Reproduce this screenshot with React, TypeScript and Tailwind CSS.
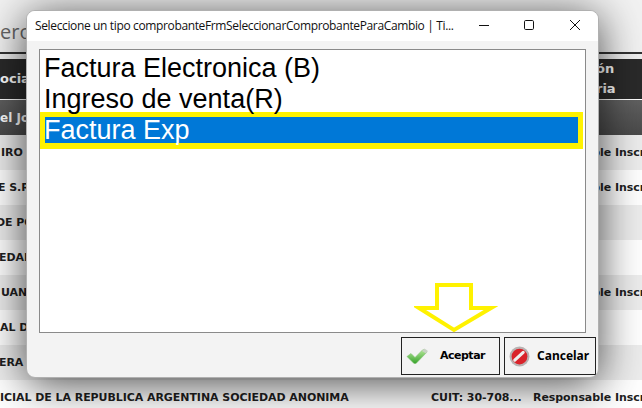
export default function App() {
  const rows = [
    { left: "IRO", cls: "ml-[1px]", bg: "bg-[#ededed]", cuit: "", resp: "Responsable Inscripto" },
    { left: "E S.R", cls: "-ml-[2px]", bg: "bg-white", cuit: "", resp: "Responsable Inscripto" },
    { left: "DE PO", cls: "-ml-[4px]", bg: "bg-[#ededed]", cuit: "", resp: "" },
    { left: "EDAD", cls: "-ml-[1px]", bg: "bg-white", cuit: "", resp: "" },
    { left: "UAN", cls: "ml-[1px]", bg: "bg-[#ededed]", cuit: "", resp: "Responsable Inscripto" },
    { left: "AL D", cls: "", bg: "bg-white", cuit: "", resp: "" },
    { left: "ERA", cls: "-ml-[1px]", bg: "bg-[#ededed]", cuit: "", resp: "" },
    { left: "ICIAL DE LA REPUBLICA ARGENTINA SOCIEDAD ANONIMA", cls: "", bg: "bg-white", cuit: "CUIT: 30-708...", resp: "Responsable Inscripto" },
  ];
  return (
    <div className="relative w-[642px] h-[408px] overflow-hidden bg-white font-['Noto_Sans',sans-serif]">
      <div className="flex flex-col h-full">
        <div className="h-[52px] shrink-0 bg-[#f2f2f2] flex items-center">
          <span className="text-[20px] leading-none text-[#666] mt-[12px] font-['Open_Sans',sans-serif]">ero</span>
        </div>
        <div className="h-[7px] shrink-0 bg-[#f0f0f0] border-t-2 border-[#333]" />
        <div className="h-[40px] shrink-0 bg-[#2a2a2a] text-white font-bold grid grid-cols-[596px_1fr] items-center border-b border-white box-content font-['DejaVu_Sans',sans-serif] text-[13px] leading-[20px]">
          <span>ocia</span>
          <span className="whitespace-nowrap">ón<br />ria</span>
        </div>
        <div className="h-[35px] shrink-0 bg-gradient-to-b from-[#606060] to-[#4a4a4a] flex items-center text-white font-bold text-[12px] font-['DejaVu_Sans',sans-serif]">
          <span>el Jo</span>
        </div>
        {rows.map((r) => (
          <div key={r.left} className={`h-[35px] pt-[2px] shrink-0 grid grid-cols-[431px_102px_1fr] items-center text-[11px] font-bold text-[#1f1f1f] whitespace-nowrap font-['DejaVu_Sans',sans-serif] tracking-[-0.06px] ${r.bg}`}>
            <span className={r.cls}>{r.left}</span>
            <span>{r.cuit}</span>
            <span>{r.resp}</span>
          </div>
        ))}
      </div>

      <div className="absolute left-[26px] top-[10px] w-[573px] h-[368px] rounded-[9px] bg-[#f3f3f3] border border-[#b0b0b0] shadow-[0_6px_44px_rgba(0,0,0,0.72)] flex flex-col overflow-hidden">
        <div className="h-[30px] shrink-0 bg-white flex items-center pl-[8px] relative">
          <span className="text-[12px] text-[#111] whitespace-nowrap font-['Open_Sans',sans-serif] tracking-[-0.36px]">Seleccione un tipo comprobanteFrmSeleccionarComprobanteParaCambio | Ti...</span>
          <svg className="absolute left-[451px] top-[8px]" width="12" height="12" viewBox="0 0 12 12"><path d="M1 6.5h10" stroke="#111" strokeWidth="1" /></svg>
          <svg className="absolute left-[496px] top-[8px]" width="12" height="12" viewBox="0 0 12 12"><rect x="1.5" y="1.5" width="9" height="9" rx="1.2" fill="none" stroke="#111" /></svg>
          <svg className="absolute left-[542px] top-[8px]" width="12" height="12" viewBox="0 0 12 12"><path d="M1 1l10 10M11 1L1 11" stroke="#111" strokeWidth="1" /></svg>
        </div>
        <div className="flex-1 flex flex-col pt-[8px] px-[12px]">
          <div className="h-[284px] shrink-0 bg-white border border-[#8a8a8a] text-[27px] leading-[31px] text-black font-['Liberation_Sans',sans-serif]">
            <div className="pl-[4px] pt-[3px]">Factura Electronica (B)</div>
            <div className="pl-[4px]">Ingreso de venta(R)</div>
            <div className="h-[37px] w-[543px] border-[5px] border-b-[6px] border-[#fff200] bg-[#0078d7] text-white leading-[26px] -mt-[3px]"><div className="-ml-[1px]">Factura Exp</div></div>
          </div>
          <div className="flex justify-end gap-[4px] mt-[4px] -mr-[10px]">
            <div className="w-[99px] h-[38px] border border-[#222] bg-[#f3f3f3] flex items-center pl-[4px] gap-[10px]">
              <svg width="24" height="18" viewBox="0 0 24 18">
                <defs>
                  <linearGradient id="chk" x1="0" y1="0" x2="0" y2="1">
                    <stop offset="0" stopColor="#b6e89a" />
                    <stop offset="1" stopColor="#37a32b" />
                  </linearGradient>
                </defs>
                <path d="M1 9.5l4-3 4 4L17 2.5l4 2.5-11 11.5H8z" fill="url(#chk)" stroke="#7fbf70" strokeWidth="0.6" />
                <path d="M16 4l2.5-2.5L22 4l-2 2.5z" fill="#c8d2c4" />
              </svg>
              <span className="text-[11px] font-bold text-black font-['DejaVu_Sans',sans-serif] tracking-[-0.5px]">Aceptar</span>
            </div>
            <div className="w-[92px] h-[38px] border border-[#222] bg-[#f3f3f3] flex items-center pl-[4px] gap-[7px]">
              <svg width="21" height="21" viewBox="0 0 20 20">
                <circle cx="10" cy="10" r="9.5" fill="#b9b2b2" />
                <circle cx="10" cy="10" r="7.5" fill="#d9232a" />
                <path d="M5.5 13.5l8-7.5" stroke="#eee" strokeWidth="3" strokeLinecap="round" />
              </svg>
              <span className="text-[12px] font-bold text-black font-['Noto_Sans',sans-serif]">Cancelar</span>
            </div>
          </div>
        </div>
      </div>

      <svg className="absolute left-[414px] top-[280px]" width="84" height="56" viewBox="0 0 84 56">
        <path d="M23 5h34v23h20L40 50 5 28h18z" fill="none" stroke="#fff200" strokeWidth="4" />
      </svg>
    </div>
  );
}
